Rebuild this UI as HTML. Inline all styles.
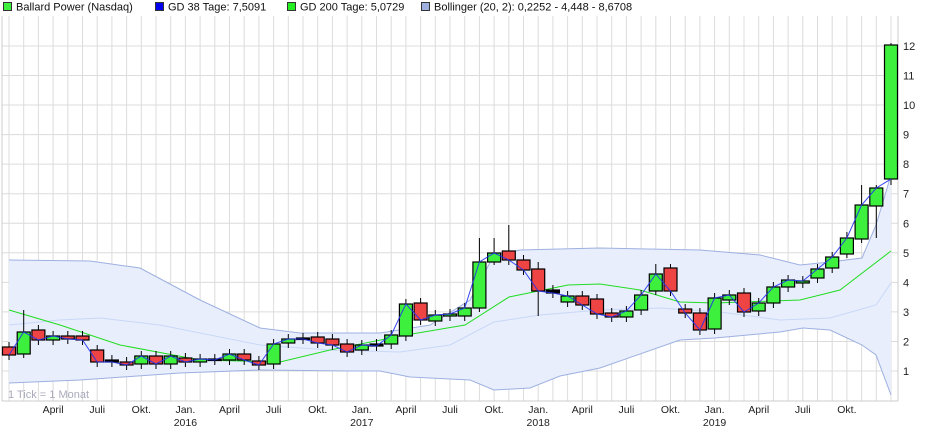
<!DOCTYPE html>
<html><head><meta charset="utf-8"><style>
body{margin:0;background:#fff;width:940px;height:435px;overflow:hidden;font-family:"Liberation Sans",sans-serif}
svg{position:absolute;left:0;top:0}
</style></head><body>
<svg id="s" width="940" height="435" xmlns="http://www.w3.org/2000/svg" font-family="Liberation Sans, sans-serif"></svg>
<script>
var s=document.getElementById('s'),h='';
function X(i){return 9+i*14.7}
for(var i=0;i<61;i++){var x=X(i);h+='<line x1="'+x+'" y1="16" x2="'+x+'" y2="401" stroke="#dcdcdc"/>';}
for(var v=1;v<=12;v++){var y=371-(v-1)*29.55;h+='<line x1="2" y1="'+y+'" x2="898" y2="'+y+'" stroke="#dcdcdc"/><text x="903" y="'+(y+4)+'" font-size="11" fill="#222">'+v+'</text>';}
h+='<line x1="2" y1="16" x2="2" y2="401" stroke="#ccc"/><line x1="898" y1="16" x2="898" y2="401" stroke="#ccc"/><line x1="2" y1="401" x2="898" y2="401" stroke="#ccc"/>';
function P(a){return a.map(function(p){return p[0]+','+p[1]}).join(' ')}
var up=[[9,260],[90,261],[140,268],[200,300],[260,328],[300,333],[380,333],[430,325],[470,300],[494,255],[520,250],[600,248],[700,250],[760,255],[800,265],[830,262],[862,258],[876,225],[891,175]];
var lo=[[9,383],[80,380],[180,373],[260,370],[350,371],[380,371],[410,377],[470,380],[494,390],[530,388],[560,376],[600,368],[680,340],[715,338],[780,332],[803,328],[830,330],[862,345],[876,355],[891,395]];
h+='<polygon points="'+P(up)+' '+P(lo.slice().reverse())+'" fill="#e8eefc"/>';
h+='<polyline points="'+P(up)+'" fill="none" stroke="#9db0e0"/><polyline points="'+P(lo)+'" fill="none" stroke="#9db0e0"/>';
var mid=[[9,325],[60,320],[100,318],[160,325],[260,345],[330,350],[400,352],[450,345],[494,322],[540,315],[600,310],[660,308],[720,312],[780,320],[830,318],[876,305],[891,283]];
h+='<polyline points="'+P(mid)+'" fill="none" stroke="#c8d8f8"/>';
var g200=[[9,310],[60,325],[120,345],[200,360],[280,362],[330,350],[406,335],[465,325],[509,297],[568,285],[600,284],[640,290],[680,302],[715,303],[800,300],[840,290],[891,251]];
h+='<polyline points="'+P(g200)+'" fill="none" stroke="#22dd22"/>';
var c=[[347,355,0],[332,354,1],[330,340,0],[336,340,1],[336,339,0],[336,340,0],[350,362,0],[360,362,2],[362,365,0],[356,364,1],[356,364,0],[356,364,1],[358,362,0],[359,362,1],[359,360,2],[354,360,1],[354,360,0],[361,365,0],[344,364,1],[339,343,1],[338,339,2],[337,343,0],[339,345,0],[344,352,0],[345,350,1],[344,346,2],[335,344,1],[304,336,1],[303,320,0],[315,321,1],[314,316,1],[308,316,1],[262,308,1],[253,262,1],[251,260,0],[260,270,0],[269,291,0],[290,293,2],[296,302,1],[296,305,0],[299,314,0],[313,317,0],[311,317,1],[295,310,1],[274,291,1],[268,291,0],[309,313,0],[313,330,0],[298,329,1],[295,300,1],[293,312,0],[303,311,1],[287,303,1],[280,287,1],[281,283,1],[269,278,1],[257,268,1],[238,254,1],[205,239,1],[188,206,1],[45,179,1]];
var wk={1:[310,358],32:[238,312],33:[238,265],34:[225,265],36:[262,316],57:[232,258],58:[185,243],59:[185,238],60:[43,185],44:[264,295],45:[264,296]};
var gd=[];
c.forEach(function(k,i){var x=X(i),w=wk[i]||[k[0]-5,k[1]+5];
gd.push([x,i==60?179:(k[2]==1?k[0]:k[1])]);
h+='<line x1="'+x+'" y1="'+w[0]+'" x2="'+x+'" y2="'+w[1]+'" stroke="#000"/>';
var f=k[2]==1?'#3ef03e':k[2]==0?'#ee4444':'#000';
h+='<rect x="'+(x-6.5)+'" y="'+k[0]+'" width="13" height="'+Math.max(k[1]-k[0],1.5)+'" fill="'+f+'" stroke="#000" stroke-width="1.2"/>';});
h+='<polyline points="'+P(gd)+'" fill="none" stroke="#2233ee" opacity="0.9"/>';
var L=[[3,'#3ef03e','Ballard Power (Nasdaq)'],[155,'#0000ee','GD 38 Tage: 7,5091'],[287,'#22ee22','GD 200 Tage: 5,0729'],[421,'#9db0e0','Bollinger (20, 2): 0,2252 - 4,448 - 8,6708']];
L.forEach(function(l){h+='<rect x="'+l[0]+'.5" y="2.5" width="8" height="8" fill="'+l[1]+'" stroke="#333"/><text x="'+(l[0]+13)+'" y="10.5" font-size="11" fill="#111">'+l[2]+'</text>';});
h+='<text x="8" y="398" font-size="11" fill="#aab">1 Tick = 1 Monat</text>';
var m=['April','Juli','Okt.','Jan.'];
for(var i=3;i<60;i+=3){h+='<text x="'+X(i)+'" y="413" font-size="10.5" fill="#222" text-anchor="middle">'+m[(i/3-1)%4]+'</text>';}
[['2016',12],['2017',24],['2018',36],['2019',48]].forEach(function(y){h+='<text x="'+X(y[1])+'" y="426" font-size="10.5" fill="#222" text-anchor="middle">'+y[0]+'</text>';});
s.innerHTML=h;
</script>
</body></html>
